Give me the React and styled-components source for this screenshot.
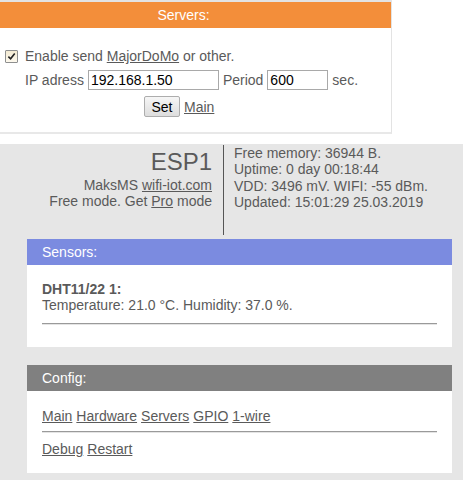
import React from 'react';
import styled, { createGlobalStyle } from 'styled-components';

const GlobalStyle = createGlobalStyle`
  html, body {
    margin: 0;
    padding: 0;
    background: #fff;
  }
  body {
    font-family: "Liberation Sans", Arial, sans-serif;
    font-size: 14px;
    color: #5a5a5a;
  }
`;

//#region Styles
const ServersPanel = styled.section`
  width: 391px;
  border-top: 2px solid #e3e3e3;
  border-right: 1px solid #e3e3e3;
  border-bottom: 2px solid #e8e8e8;
  background: #fff;
`;

const PanelHead = styled.div`
  height: 26px;
  line-height: 26px;
  background: ${({ $color }) => $color};
  color: #fff;
  text-align: ${({ $center }) => ($center ? 'center' : 'left')};
  padding: ${({ $center }) => ($center ? '0 24px 0 0' : '0 0 0 15px')};
`;

const ServersBody = styled.div`
  padding: 20px 0 15px 5px;
`;

const Row = styled.div`
  display: flex;
  align-items: center;
  min-height: 16px;
  margin-top: ${({ $top }) => $top || 0}px;
  padding-left: ${({ $indent }) => $indent || 0}px;
  line-height: 16px;
  white-space: pre;
`;

const CheckBox = styled.span`
  box-sizing: border-box;
  width: 13px;
  height: 13px;
  border: 1px solid #8e8f8f;
  border-radius: 1px;
  background: linear-gradient(#f3ead2, #fdf9ee);
  display: flex;
  align-items: center;
  justify-content: center;
  margin-right: 7px;
  svg {
    width: 9px;
    height: 9px;
  }
`;

const Field = styled.input`
  box-sizing: border-box;
  height: 20px;
  width: ${({ $w }) => $w}px;
  border: 1px solid #a9a9a9;
  padding: 0 2px;
  margin: 0 4px;
  font: 14px "Liberation Sans", Arial, sans-serif;
  color: #000;
  outline: none;
`;

const Button = styled.button`
  box-sizing: border-box;
  height: 21px;
  width: 36px;
  border: 1px solid #adadad;
  border-radius: 2px;
  background: linear-gradient(#f6f6f6, #dddddd);
  font: 14px "Liberation Sans", Arial, sans-serif;
  color: #000;
  padding: 0;
  margin-right: 4px;
`;

const Link = styled.a`
  color: inherit;
  text-decoration: underline;
  cursor: pointer;
`;

const Page = styled.main`
  width: 425px;
  margin-top: 10px;
  background: #e6e6e6;
  padding: 0 11px 7px 27px;
  display: flex;
  flex-direction: column;
`;

const Header = styled.header`
  display: flex;
  height: 91px;
  margin-left: -27px;
`;

const Brand = styled.div`
  width: 212px;
  padding-right: 11px;
  text-align: right;
  line-height: 16.3px;
`;

const Title = styled.div`
  font-size: 24px;
  line-height: 30px;
  padding-top: 3px;
`;

const Status = styled.div`
  border-left: 1px solid #555;
  margin-top: 1px;
  padding-left: 10px;
  line-height: 16.3px;
`;

const Card = styled.section`
  background: #fff;
  margin-top: ${({ $top }) => $top}px;
`;

const CardBody = styled.div`
  padding: ${({ $pad }) => $pad};
  line-height: 16px;
`;

const Rule = styled.hr`
  border: none;
  border-top: 1px solid #9a9a9a;
  border-bottom: 1px solid #e4e4e4;
  margin: ${({ $m }) => $m};
`;

const Links = styled.div`
  display: flex;
  gap: 4px;
`;
//#endregion

const Check = () => (
  <svg viewBox="0 0 10 10">
    <path d="M1.5 5.2 L4 7.6 L8.6 1.8" fill="none" stroke="#222" strokeWidth="1.8" />
  </svg>
);

const App = () => (
  <>
    <GlobalStyle />
    <ServersPanel>
      <PanelHead $color="#f38e3a" $center>
        Servers:
      </PanelHead>
      <ServersBody>
        <Row>
          <CheckBox>
            <Check />
          </CheckBox>
          Enable send <Link>MajorDoMo</Link> or other.
        </Row>
        <Row $top={6} $indent={20}>
          IP adress
          <Field $w={131} defaultValue="192.168.1.50" />
          Period
          <Field $w={61} defaultValue="600" />
          sec.
        </Row>
        <Row $top={6} $indent={139}>
          <Button>Set</Button>
          <Link>Main</Link>
        </Row>
      </ServersBody>
    </ServersPanel>

    <Page>
      <Header>
        <Brand>
          <Title>ESP1</Title>
          <div>
            MaksMS <Link>wifi-iot.com</Link>
          </div>
          <div>
            Free mode. Get <Link>Pro</Link> mode
          </div>
        </Brand>
        <Status>
          <div>Free memory: 36944 B.</div>
          <div>Uptime: 0 day 00:18:44</div>
          <div>VDD: 3496 mV. WIFI: -55 dBm.</div>
          <div>Updated: 15:01:29 25.03.2019</div>
        </Status>
      </Header>

      <Card $top={4}>
        <PanelHead $color="#7b8be0">Sensors:</PanelHead>
        <CardBody $pad="16px 15px 22px">
          <b>DHT11/22 1:</b>
          <div>Temperature: 21.0 °C. Humidity: 37.0 %.</div>
          <Rule $m="10px 0 0" />
        </CardBody>
      </Card>

      <Card $top={18}>
        <PanelHead $color="#808080">Config:</PanelHead>
        <CardBody $pad="17px 15px 16px">
          <Links>
            <Link>Main</Link>
            <Link>Hardware</Link>
            <Link>Servers</Link>
            <Link>GPIO</Link>
            <Link>1-wire</Link>
          </Links>
          <Rule $m="7px 0 8px" />
          <Links>
            <Link>Debug</Link>
            <Link>Restart</Link>
          </Links>
        </CardBody>
      </Card>
    </Page>
  </>
);

export default App;
